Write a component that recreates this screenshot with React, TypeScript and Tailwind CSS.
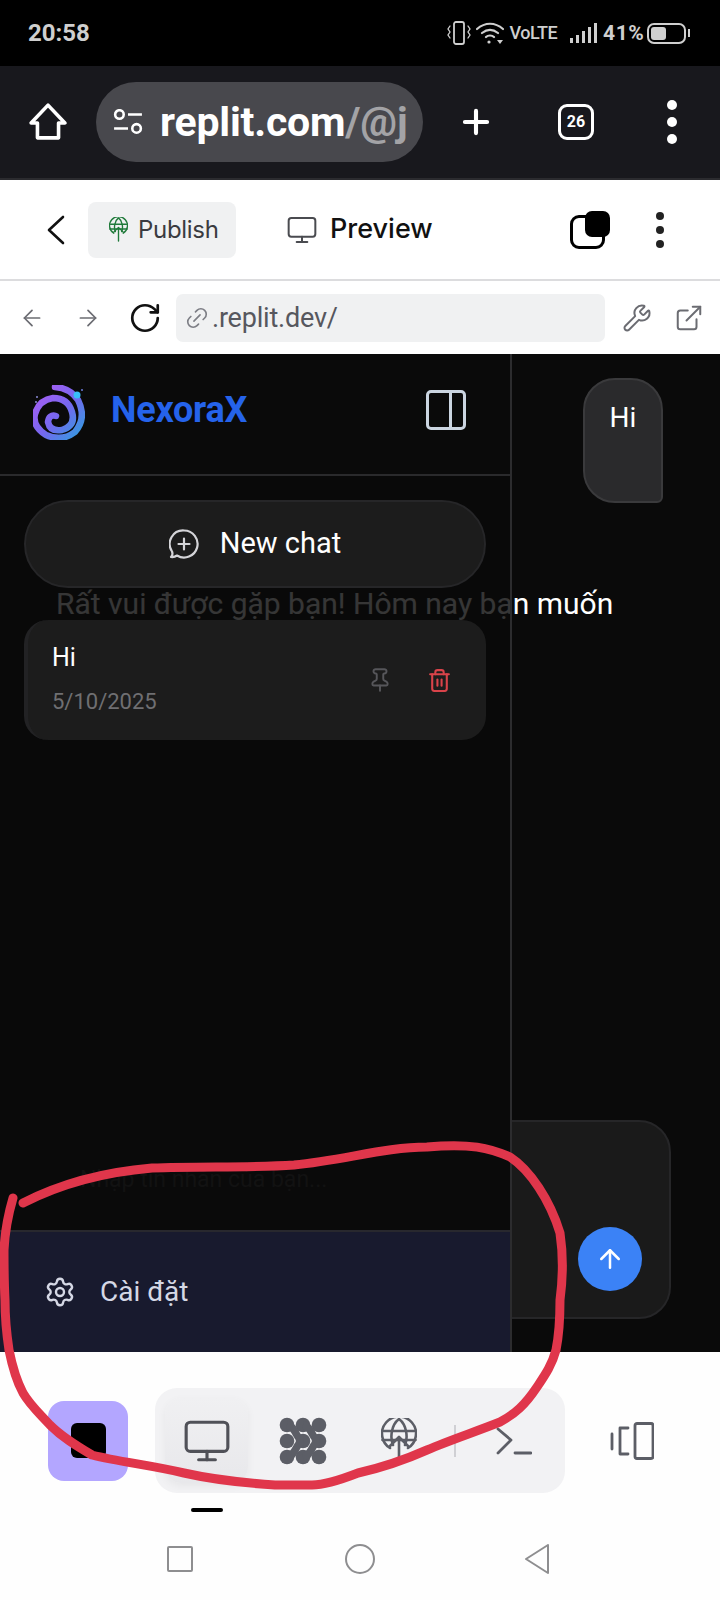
import { ArrowLeft, ArrowRight, ArrowUp, ExternalLink, Link2, Monitor, Pin, Plus, RotateCw, Settings, Trash2, Wrench } from "lucide-react";

function GlobeUp({ color, className }: { color: string; className: string }) {
  return (
    <svg viewBox="0 0 36 46" fill="none" stroke={color} strokeWidth="2.6" strokeLinecap="round" strokeLinejoin="round" className={className}>
      <path d="M9 30A17 17 0 1 1 27 30" />
      <path d="M3 13H33M1.5 22H34.5" />
      <path d="M18 1C10 7 9 20 12 27M18 1C26 7 27 20 24 27" />
      <path d="M18 45V20M9 28L18 19L27 28" />
    </svg>
  );
}

function Blobs() {
  const g = "#5c5e66";
  const dots: [number, number][] = [[8, 8], [24, 8], [40, 8], [8, 24], [24, 24], [40, 24], [8, 40], [24, 40], [40, 40]];
  return (
    <svg viewBox="0 0 48 48" className="w-[48px] h-[48px]">
      {dots.map(([x, y]) => <circle key={`${x}-${y}`} cx={x} cy={y} r="7.3" fill={g} />)}
      <path d="M8 8C17 9 17 23 24 24C17 25 17 39 8 40" stroke={g} strokeWidth="7.5" fill="none" />
      <path d="M24 8C33 9 33 23 40 24C33 25 33 39 24 40" stroke={g} strokeWidth="7.5" fill="none" />
    </svg>
  );
}

function Logo() {
  return (
    <svg viewBox="13 15 52 55" fill="none" className="w-[52px] h-[55px] mt-[4px]">
      <defs>
        <linearGradient id="sp" x1="0" y1="0" x2="1" y2="1">
          <stop offset="0" stopColor="#b05cf5" />
          <stop offset="0.55" stopColor="#7468ee" />
          <stop offset="1" stopColor="#2f9fe0" />
        </linearGradient>
      </defs>
      <path d="M35 17Q50 18 58 30Q67 48 55 62Q42 72 26 65Q12 56 15 44Q19 30 33 28Q48 28 52 42Q56 56 42 60Q30 62 28 52Q29 44 36 46" stroke="url(#sp)" strokeWidth="6.5" strokeLinecap="round" />
      <circle cx="57" cy="25" r="3.5" fill="#38bdf8" />
      <circle cx="17" cy="27" r="1" fill="#8b8bd8" />
      <circle cx="16" cy="32" r="1" fill="#8b8bd8" />
      <circle cx="62" cy="20" r="1" fill="#6b7bd8" />
    </svg>
  );
}

function StatusIcons() {
  const c = "#cfcfcf";
  return (
    <div className="flex items-center">
      <svg viewBox="0 0 24 24" fill="none" stroke={c} strokeWidth="1.8" strokeLinecap="round" className="w-[24px] h-[24px]">
        <rect x="7" y="1" width="10" height="22" rx="2" />
        <path d="M3 5L1 8L3 11L1 14L3 17M21 5L23 8L21 11L23 14L21 17" strokeWidth="1.3" />
      </svg>
      <svg viewBox="0 0 28 24" fill="none" stroke={c} strokeWidth="2.2" strokeLinecap="round" className="w-[28px] h-[24px] ml-[5px]">
        <path d="M1 8C9 1 19 1 27 8M6 12C11 8 17 8 22 12M10 16C12 14 16 14 18 16" />
        <circle cx="13" cy="21" r="1.6" fill={c} stroke="none" />
        <path d="M21 19H27L24 23Z" fill={c} stroke="none" />
      </svg>
      <span className="ml-[6px] w-[60px] text-[18px] leading-none font-medium text-[#cfcfcf] font-['Roboto',sans-serif] tracking-[-0.5px]">VoLTE</span>
      <div className="flex items-end gap-[2.5px] h-[20px]">
        {["h-[5px]", "h-[8px]", "h-[12px]", "h-[16px]", "h-[20px]"].map((h) => (
          <div key={h} className={`w-[3.5px] ${h} bg-[#cfcfcf]`} />
        ))}
      </div>
      <span className="ml-[6px] w-[44px] text-[21px] leading-none font-bold text-[#cfcfcf] font-['Roboto',sans-serif] tracking-[0.6px]">41%</span>
      <div className="flex items-center">
        <div className="w-[39px] h-[21px] rounded-[7px] border-2 border-[#cfcfcf] p-[2px]">
          <div className="w-[15px] h-full rounded-[3px] bg-[#cfcfcf]" />
        </div>
        <div className="ml-[2px] w-[2px] h-[8px] bg-[#cfcfcf]" />
      </div>
    </div>
  );
}

export default function App() {
  return (
    <div className="relative w-[720px] h-[1600px] overflow-hidden bg-white font-['Roboto',sans-serif]">
      {/* status bar */}
      <div className="h-[66px] bg-black flex items-center justify-between pl-[28px] pr-[30px]">
        <span className="text-[24px] font-bold text-[#cfcfcf] font-['Roboto',sans-serif]">20:58</span>
        <StatusIcons />
      </div>

      {/* browser toolbar */}
      <div className="h-[114px] bg-[#18181d] border-b-2 border-[#2b2b2f] flex items-center pl-[29px]">
        <svg viewBox="0 0 36 36" fill="none" stroke="white" strokeWidth="3.4" strokeLinejoin="round" className="w-[38px] h-[38px]">
          <path d="M18 2L34 19H28V33H8V19H2Z" />
        </svg>
        <div className="ml-[29px] w-[327px] h-[80px] rounded-full bg-[#48484d] flex items-center pl-[17px] overflow-hidden">
          <svg viewBox="0 0 28 24" fill="none" stroke="white" strokeWidth="2.4" className="w-[30px] h-[26px] shrink-0">
            <circle cx="6" cy="5" r="4" />
            <path d="M14 5H27M1 18H14" />
            <circle cx="22" cy="18" r="4" />
          </svg>
          <span className="ml-[17px] text-[41px] leading-none font-bold text-white whitespace-nowrap tracking-[-0.2px]">
            replit.com<span className="text-[#a3a3a6]">/@j</span>
          </span>
        </div>
        <Plus color="white" strokeWidth={2.6} className="ml-[34px] w-[38px] h-[38px]" />
        <div className="ml-[63px] w-[36px] h-[36px] rounded-[9px] border-[3px] border-white flex items-center justify-center text-[16px] font-bold text-white">26</div>
        <div className="ml-[73px] flex flex-col gap-[7px]">
          <div className="w-[10px] h-[10px] rounded-full bg-white" />
          <div className="w-[10px] h-[10px] rounded-full bg-white" />
          <div className="w-[10px] h-[10px] rounded-full bg-white" />
        </div>
      </div>

      {/* replit header */}
      <div className="h-[101px] bg-white border-b-[2px] border-[#dcdcde] flex items-center pl-[47px]">
        <svg viewBox="0 0 18 30" fill="none" stroke="#111" strokeWidth="2.6" strokeLinecap="round" strokeLinejoin="round" className="w-[18px] h-[30px]">
          <path d="M16 2L2 15L16 28" />
        </svg>
        <div className="ml-[23px] w-[148px] h-[56px] rounded-[8px] bg-[#f0f1f2] flex items-center pl-[21px]">
          <GlobeUp color="#1f7a3a" className="w-[19px] h-[25px]" />
          <span className="ml-[10px] text-[24px] text-[#3a3b40] font-['Inter',sans-serif] tracking-[-0.3px]">Publish</span>
        </div>
        <Monitor color="#4a4b50" strokeWidth={1.5} className="ml-[50px] w-[32px] h-[32px]" />
        <span className="ml-[12px] text-[27px] font-medium text-[#111] font-['Inter',sans-serif]">Preview</span>
        <div className="relative ml-[137px] w-[40px] h-[38px]">
          <div className="absolute left-0 bottom-0 w-[35px] h-[34px] rounded-[9px] border-[3px] border-black" />
          <div className="absolute right-0 top-0 w-[25px] h-[26px] rounded-[7px] bg-black" />
        </div>
        <div className="ml-[46px] flex flex-col gap-[6px]">
          <div className="w-[8px] h-[8px] rounded-full bg-[#222]" />
          <div className="w-[8px] h-[8px] rounded-full bg-[#222]" />
          <div className="w-[8px] h-[8px] rounded-full bg-[#222]" />
        </div>
      </div>

      {/* address row */}
      <div className="h-[73px] bg-white flex items-center pl-[19px]">
        <ArrowLeft color="#6b6c72" strokeWidth={1.6} className="w-[26px] h-[26px]" />
        <ArrowRight color="#6b6c72" strokeWidth={1.6} className="ml-[30px] w-[26px] h-[26px]" />
        <RotateCw color="#111" strokeWidth={1.9} className="ml-[27px] w-[34px] h-[34px]" />
        <div className="ml-[14px] w-[429px] h-[48px] rounded-[7px] bg-[#f0f1f2] flex items-center pl-[8px]">
          <Link2 color="#7d7e85" strokeWidth={1.5} className="w-[26px] h-[26px] -rotate-45" />
          <span className="ml-[2px] pt-[2px] text-[27px] text-[#56575e] tracking-[-0.2px]">.replit.dev/</span>
        </div>
        <Wrench color="#6b6c72" strokeWidth={1.6} className="ml-[17px] w-[30px] h-[30px]" />
        <ExternalLink color="#6b6c72" strokeWidth={1.6} className="ml-[22px] w-[30px] h-[30px]" />
      </div>

      {/* dark app */}
      <div className="relative h-[998px] bg-[#0a0a0a] overflow-hidden">
        {/* chat behind */}
        <div className="h-full flex flex-col pt-[24px] pl-[56px] pr-[49px] pb-[33px]">
          <div className="self-end mr-[8px] w-[80px] h-[125px] rounded-[32px] rounded-br-[6px] border-2 border-[#3a3a3c] bg-[#2a2a2c] flex justify-center pt-[22px] text-[28px] leading-[32px] text-white">Hi</div>
          <div className="mt-[83px] text-[30px] leading-[36px] text-white whitespace-nowrap">Rất vui được gặp bạn! Hôm nay bạn muốn</div>
          <div className="mt-auto h-[199px] -ml-[8px] rounded-[32px] border-2 border-[#262628] bg-[#1a1a1a] flex items-end justify-end p-[26px] pr-[27px]">
            <div className="w-[64px] h-[64px] rounded-full bg-[#3b82f6] flex items-center justify-center">
              <ArrowUp color="white" strokeWidth={2} className="w-[30px] h-[30px]" />
            </div>
          </div>
        </div>

        {/* sidebar overlay */}
        <div className="absolute inset-y-0 left-0 w-[512px] flex flex-col border-r-2 border-[#2c2c2e] bg-[#0a0a0a]/[0.82]">
          <div className="h-[122px] shrink-0 border-b-2 border-[#2a2a2c] flex items-center pl-[33px] pr-[44px] pb-[8px] bg-[#0a0a0a]">
            <Logo />
            <span className="ml-[26px] text-[36px] font-bold text-[#2563eb] tracking-[-0.2px]">NexoraX</span>
            <div className="ml-auto w-[40px] h-[40px] rounded-[5px] border-[3px] border-[#cbd5e1] flex justify-end">
              <div className="w-[14px] h-full border-l-[3px] border-[#cbd5e1]" />
            </div>
          </div>
          <div className="flex-1 flex flex-col pt-[24px] px-[24px]">
            <div className="h-[88px] rounded-full border-2 border-[#262628] bg-[#1c1c1c] flex items-center justify-center gap-[21px]">
              <svg viewBox="0 0 30 30" fill="none" stroke="#d4d4d8" strokeWidth="2.2" strokeLinecap="round" strokeLinejoin="round" className="w-[30px] h-[30px]">
                <path d="M15 1.5A13.5 13.5 0 1 1 8 26.5C6 28 4 28.3 2 28C3.5 26.5 3.6 24 3 22.5A13.5 13.5 0 0 1 15 1.5Z" />
                <path d="M15 9.5V20.5M9.5 15H20.5" />
              </svg>
              <span className="text-[29px] text-white">New chat</span>
            </div>
            <div className="mt-[32px] h-[120px] rounded-[24px] bg-[#1c1c1c] border-l-4 border-[#222224] flex items-center pl-[24px] pr-[34px]">
              <div className="flex-1">
                <div className="text-[25px] leading-[32px] text-white">Hi</div>
                <div className="mt-[12px] text-[22px] leading-[32px] text-[#6f6f72]">5/10/2025</div>
              </div>
              <Pin color="#56565a" strokeWidth={1.8} className="w-[26px] h-[26px]" />
              <Trash2 color="#d9434a" strokeWidth={2} className="ml-[34px] w-[25px] h-[25px]" />
            </div>
          </div>
          <div className="h-[120px] shrink-0 bg-[#0a0a0a] flex items-end pl-[80px] pb-[34px] text-[23px] leading-[32px] text-[#121212]">Nhập tin nhắn của bạn...</div>
          <div className="h-[122px] shrink-0 bg-[#181a2e] border-t-2 border-[#28282e] flex items-center pl-[44px]">
            <Settings color="#d5d8e5" strokeWidth={1.8} className="w-[32px] h-[32px]" />
            <span className="ml-[24px] text-[28px] text-[#d5d8e5]">Cài đặt</span>
          </div>
        </div>
      </div>

      {/* bottom dock */}
      <div className="h-[248px] bg-[#fefefe]">
        <div className="flex items-center pt-[36px] pl-[48px]">
          <div className="w-[80px] h-[80px] rounded-[16px] bg-[#b3a6ff] flex items-center justify-center">
            <div className="w-[35px] h-[35px] rounded-[6px] bg-black" />
          </div>
          <div className="ml-[27px] w-[410px] h-[105px] rounded-[22px] bg-[#f2f2f4] flex items-center pl-[10px]">
            <div className="w-[83px] h-[85px] rounded-[16px] bg-linear-to-b from-[#f0f0f2] to-[#e8e8eb] shadow-[0_3px_8px_rgba(0,0,0,0.05)] flex items-center justify-center">
              <Monitor color="#505158" strokeWidth={1.5} className="w-[50px] h-[50px]" />
            </div>
            <div className="ml-[31px]"><Blobs /></div>
            <GlobeUp color="#5c5e66" className="ml-[54px] w-[36px] h-[46px]" />
            <div className="ml-[37px] w-[2px] h-[32px] bg-[#d0d0d4]" />
            <svg viewBox="0 0 36 28" fill="none" stroke="#5c5e66" strokeWidth="2.8" strokeLinecap="round" strokeLinejoin="round" className="ml-[40px] w-[36px] h-[28px]">
              <path d="M2 2L15 13L2 26M19 26H35" />
            </svg>
          </div>
          <svg viewBox="0 0 44 38" fill="none" stroke="#5c5e66" strokeWidth="2.8" strokeLinecap="round" strokeLinejoin="round" className="ml-[45px] w-[44px] h-[38px]">
            <rect x="25" y="1.5" width="18" height="35" rx="2" />
            <path d="M18 6H10V32H18M2 12V27" />
          </svg>
        </div>
        <div className="mt-[15px] ml-[191px] w-[32px] h-[4px] rounded-full bg-black" />
        <div className="mt-[32px] flex items-center pl-[167px]">
          <div className="w-[26px] h-[26px] rounded-[2px] border-2 border-[#8e8e90]" />
          <div className="ml-[152px] w-[30px] h-[30px] rounded-full border-2 border-[#8e8e90]" />
          <svg viewBox="0 0 26 30" fill="none" stroke="#8e8e90" strokeWidth="2" strokeLinejoin="round" className="ml-[149px] w-[26px] h-[30px]">
            <path d="M24 1V29L2 15Z" />
          </svg>
        </div>
      </div>

      {/* hand-drawn annotation */}
      <svg viewBox="0 0 720 1600" fill="none" className="absolute inset-0 w-[720px] h-[1600px] pointer-events-none">
        <path d="M23 1203C60 1184 105 1172 152 1168C200 1166 250 1168 294 1165C345 1160 385 1147 427 1147C470 1143 490 1148 510 1157C530 1170 550 1200 560 1233C564 1260 562 1285 560 1300C560 1320 559 1335 556 1350C552 1365 545 1375 537 1387C525 1405 515 1414 500 1422C475 1432 450 1440 427 1450C400 1462 380 1468 358 1473C340 1480 325 1485 312 1485H275C245 1483 215 1480 184 1473C150 1465 120 1462 92 1455C75 1445 62 1437 50 1425C38 1412 30 1405 23 1393C15 1378 12 1365 9 1350C6 1330 5 1315 5 1300C4 1280 4 1265 4 1250C5 1230 8 1215 13 1198" stroke="#e0364b" strokeWidth="9" strokeLinecap="round" strokeLinejoin="round" />
      </svg>
    </div>
  );
}
